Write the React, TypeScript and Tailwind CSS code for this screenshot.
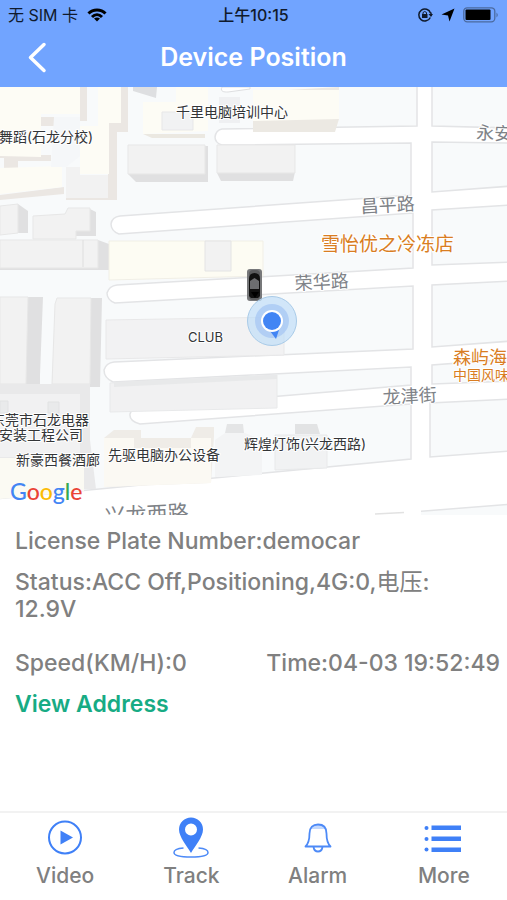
import React from 'react';

const shadows = [
  'M0 114H41V117H54V126H0Z M80 87H87V121H80Z M121 87H128V132H117V200H66V192H108V123H121Z',
  'M0 155H51V161H18V168H4V158H0Z',
  'M0 195L64 187V194L0 200Z',
];

// grey blocks: top face first, darker side faces under it
const buildings = [
  { side: 'M128 174L136 182H208V146H205V174Z', top: 'M128 145H205V174H128Z' },
  { side: 'M217 173L221 181H293L295 172Z', top: 'M217 145H295V173H217Z' },
  { side: 'M18 204L28 211V233H18Z', top: 'M0 206L18 204V233L0 235Z' },
  { side: 'M90 209L96 212V236H76V230H90Z', top: 'M33 216L65 214L68 208H90V231H76V239H33Z' },
  { side: 'M98 240L109 244V270H0V267H98Z', top: 'M0 240H98V268H0Z' },
  { side: 'M28 297H43L40 375V384H0V375H26Z', top: 'M0 297H28L26 384H0Z' },
  { side: 'M91 298H102L100 387H52V375H90Z', top: 'M52 384L55 304L57 298H91L90 384Z' },
];

const roads = [
  'M222 129L417 126V80H432V126L512 128V143L432 142V192L512 186V205L432 210V265L512 262V281L432 285V347L512 341V359L432 365V384L512 381V399L430 403V457L512 451V504L0 545L-5 499L411 459V404L140 424Q129 421 130 414Q131 409 139 408L411 385V367L113 382Q104 378 104 370Q106 363 114 362L413 349V286L115 303Q107 300 107 293Q109 286 117 285L413 268V213L119 234Q111 231 111 224Q112 217 120 216L411 195V143L222 145Q215 143 215 137Q216 130 222 129Z',
];

const placeLabels = [
  { x: 176, y: 117, size: 14, text: '千里电脑培训中心' },
  { x: -1, y: 142, size: 14, text: '舞蹈(石龙分校)' },
  { x: 188, y: 342, size: 13, text: 'CLUB' },
  { x: -9, y: 425, size: 14, text: '东莞市石龙电器' },
  { x: -1, y: 440, size: 14, text: '安装工程公司' },
  { x: 16, y: 465, size: 14, text: '新豪西餐酒廊' },
  { x: 108, y: 460, size: 14, text: '先驱电脑办公设备' },
  { x: 244, y: 449, size: 14, text: '辉煌灯饰(兴龙西路)' },
];

const roadLabels = [
  { x: 361, y: 213, angle: -3, text: '昌平路' },
  { x: 295, y: 290, angle: -3, text: '荣华路' },
  { x: 383, y: 404, angle: -3, text: '龙津街' },
  { x: 476, y: 139, angle: 2, text: '永安路' },
];

const googleLetters = [
  { letter: 'G', color: 'text-[#4285f4]' },
  { letter: 'o', color: 'text-[#ea4335]' },
  { letter: 'o', color: 'text-[#fbbc05]' },
  { letter: 'g', color: 'text-[#4285f4]' },
  { letter: 'l', color: 'text-[#34a853]' },
  { letter: 'e', color: 'text-[#ea4335]' },
];

const VideoIcon = () => (
  <svg viewBox="0 0 40 42" className="w-10 h-[42px]" fill="none">
    <circle cx="20" cy="20.500" r="16" stroke="#3f80f7" strokeWidth="2" />
    <path d="M15.500 13.500L28 20.500L15.500 27.500Z" fill="#3f80f7" />
  </svg>
);

const TrackIcon = () => (
  <svg viewBox="0 0 40 42" className="w-10 h-[42px]" fill="none">
    <path
      d="M20 36C16 29 8 20 8 12.500A12 12 0 0 1 32 12.500C32 20 24 29 20 36ZM20 6.500A6 6 0 1 0 20 18.500A6 6 0 1 0 20 6.500Z"
      fill="#3f80f7"
      fillRule="evenodd"
    />
    <path d="M12.500 31C6 31.500 3 33 3 35.500C3 38.500 10 40 20 40S37 38.500 37 35.500C37 33 34 31.500 27.500 31" stroke="#4d8af7" strokeWidth="1.500" />
  </svg>
);

const AlarmIcon = () => (
  <svg viewBox="0 0 40 42" className="w-10 h-[42px]" fill="none">
    <path d="M13 12C15 6 25 6 27 12Z" fill="#c3d8fd" />
    <path
      d="M7.500 29.500C10 27 11.500 23 11.500 16.500C11.500 10.500 15 7.500 20 7.500S28.500 10.500 28.500 16.500C28.500 23 30 27 32.500 29.500ZM15.500 30C16 33 18 34.500 20 34.500S24 33 24.500 30"
      stroke="#4d8af7"
      strokeWidth="1.800"
      strokeLinejoin="round"
    />
  </svg>
);

const MoreIcon = () => (
  <svg viewBox="0 0 40 42" className="w-10 h-[42px]" fill="#3f80f7">
    <circle cx="2.500" cy="11" r="2" />
    <circle cx="2.500" cy="22" r="2" />
    <circle cx="2.500" cy="32.500" r="2" />
    <path d="M7.500 8.500H37V13H7.500ZM7.500 19.500H37V24H7.500ZM7.500 30.500H37V35H7.500Z" />
  </svg>
);

const tabs = [
  { label: 'Video', icon: <VideoIcon /> },
  { label: 'Track', icon: <TrackIcon /> },
  { label: 'Alarm', icon: <AlarmIcon /> },
  { label: 'More', icon: <MoreIcon /> },
];

const StatusBar: React.FC = () => (
  <div className="grid grid-cols-3 items-center h-[30px] px-2 text-base text-[#101a2c]">
    <div className="flex items-center gap-[9px]">
      <span>无 SIM 卡</span>
      <svg viewBox="0 0 20 14" className="w-5 h-3.5" fill="none" stroke="#000" strokeWidth="3">
        <path d="M1.500 5.500C6 0.800 14 0.800 18.500 5.500M5 9C8 6 12 6 15 9" />
        <path d="M7 10.500Q10 8.500 13 10.500L10 13.500Z" fill="#000" stroke="none" />
      </svg>
    </div>
    <div className="text-center font-medium">上午10:15</div>
    <div className="flex items-center justify-end gap-2">
      <svg viewBox="0 0 16 16" className="w-4 h-4" fill="none" stroke="#101a2c" strokeWidth="1.500">
        <path d="M13.300 10.500A6 6 0 1 1 13.500 6M14 5.500V9" />
        <path d="M11.500 7H16L14 10Z" fill="#101a2c" stroke="none" />
        <rect x="5" y="7" width="5.500" height="4" fill="#101a2c" stroke="none" />
        <path d="M6 7V5.500Q7.700 3.500 9.500 5.500V7" strokeWidth="1" />
      </svg>
      <svg viewBox="0 0 14 14" className="w-3.5 h-3.5" fill="#000">
        <path d="M13.500 0.500L8.500 13.500L7 7.500L0.500 6.500Z" />
      </svg>
      <svg viewBox="0 0 36 16" className="w-9 h-4">
        <rect x="0.800" y="0.800" width="31" height="14" rx="3.500" fill="none" stroke="#4b6a9f" strokeWidth="1.300" />
        <rect x="2.500" y="2.500" width="25" height="10.500" rx="1" fill="#000" />
        <path d="M33.500 5.500Q36 7.800 33.500 10.500Z" fill="#4b6a9f" />
      </svg>
    </div>
  </div>
);

const DeviceMap: React.FC = () => (
  <div className="relative h-[428px] overflow-hidden bg-[#f8fafb]">
    <svg viewBox="0 87 507 428" preserveAspectRatio="xMidYMid slice" className="w-full h-full">
      {shadows.map((d) => (
        <path key={d} d={d} fill="#ebe7e3" />
      ))}
      <g fill="#fdfcf5">
        <path d="M0 87H80V114H41V157L0 156Z" />
        <path d="M98 87H121V123H109V174H80V126H98Z" />
        <path d="M0 168L62 166V187L0 194Z" />
        <path d="M143 102H176V87H208V131L143 134Z" />
      </g>
      <path d="M54 117H80V156L66 167H51Z" fill="#f5f7f9" />
      <path d="M66 167H80V175H108V198H66Z" fill="#f2f2f2" />
      <path d="M143 134H205V138H152Z" fill="#ebe8e1" />
      <path d="M162 112H193V130H162Z" fill="#f1f2f3" stroke="#e7e7e8" />
      <path d="M133 87H157L156 98L133 91Z" fill="#dedfe1" />
      <path d="M219 97H240V123H219Z" fill="#eff0f2" />

      {roads.map((d) => (
        <path key={d} d={d} fill="#fff" stroke="#e3e4e6" strokeWidth="1.500" />
      ))}
      <path d="M222 87C220 92 224 92 228 92L250 89V87Z" fill="#fff" stroke="#dedfe1" />
      <path d="M253 92L339 87V119L335 132H253Z" fill="#ece9e3" />
      <path d="M253 90H339V119L253 121Z" fill="#fdfcf5" />

      {buildings.map((b) => (
        <g key={b.top}>
          <path d={b.side} fill="#e0e0e1" />
          <path d={b.top} fill="#f2f2f2" stroke="#e7e7e7" strokeWidth="1" />
        </g>
      ))}
      <path d="M83 240V267" stroke="#dedede" />
      <path d="M109 241H263V276L109 280Z" fill="#fdfcf3" stroke="#f1efe6" />
      <path d="M205 241H231V271H205Z" fill="#f2f2f2" stroke="#e4e4e4" />
      <path d="M106 320L284 317V355L106 359Z" fill="#f2f2f3" stroke="#e8e8e9" />
      <path d="M110 383L277 375V408L110 412Z" fill="#f1f1f2" stroke="#e8e9ea" />
      <path d="M114 382L277 375V379L114 387Z" fill="#e8e9ea" />

      <path d="M0 384H90V440L96 489H0Z" fill="#e9e9ea" />
      <path d="M0 394H80V457H0Z" fill="#f1f1f2" />
      <path d="M0 401H8V413H0ZM48 402H59V413H48Z" fill="#e9eaeb" stroke="#e1e2e3" />
      <path d="M0 458H84V491L0 499Z" fill="#fbfaf3" />
      <path d="M104 438L114 430H141V438H191L196 427H214V436L211 483L104 487Z" fill="#efece7" />
      <path d="M104 438H134V448H191V438H211V483L104 487Z" fill="#fbf9f3" />
      <path d="M225 433H245L262 440V475L215 477V440Z" fill="#f3f4f5" />
      <path d="M227 424H243L244 433H225Z" fill="#e4e5e6" />
      <path d="M295 424H317L320 434H295Z" fill="#e2e3e4" />
      <path d="M275 435H327V468L275 470Z" fill="#f1f2f3" stroke="#e8e9ea" />
      <path d="M340 506H421V516H340Z" fill="#fff" />
      <path d="M375 514L404 512.500" stroke="#e2e2e2" strokeWidth="1.500" />

      <g fill="#333537" stroke="#fff" strokeWidth="2" strokeLinejoin="round" paintOrder="stroke">
        {placeLabels.map((p) => (
          <text key={p.text} x={p.x} y={p.y} fontSize={p.size}>{p.text}</text>
        ))}
      </g>
      <g fill="#7e8287" fontSize="18" stroke="#fff" strokeWidth="2" paintOrder="stroke">
        {roadLabels.map((r) => (
          <text key={r.text} x={r.x} y={r.y} transform={`rotate(${r.angle} ${r.x} ${r.y})`}>{r.text}</text>
        ))}
        <text x="105" y="524" fontSize="21" transform="rotate(-3 105 524)">兴龙西路</text>
      </g>
      <g fill="#d97d22" stroke="#fff" strokeWidth="2" paintOrder="stroke">
        <text x="321" y="251" fontSize="19">雪怡优之冷冻店</text>
        <text x="453" y="364" fontSize="18">森屿海鲜</text>
        <text x="453" y="380" fontSize="14">中国风味</text>
      </g>

      {/* device marker */}
      <rect x="247" y="269" width="15" height="32" rx="3" fill="#77787a" />
      <rect x="249" y="270" width="11" height="30" rx="4" fill="#5b5c5e" />
      <path d="M249 279Q249 273 254.500 273Q260 273 260 279V296L258 298H251L249 296Z" fill="#111" />
      <path d="M250 281L254.500 278L259 281V289H250Z" fill="#6d6e70" />
      <path d="M251 292H259L255 298Z" fill="#000" />

      {/* own position */}
      <circle cx="272" cy="321" r="24.500" fill="#bcdcf8" fillOpacity="0.650" stroke="#a9cbe8" />
      <circle cx="272" cy="321" r="17" fill="#a4c4f3" fillOpacity="0.700" />
      <path d="M270 331L279 330L276 339Z" fill="#4285f4" />
      <circle cx="272" cy="321" r="11" fill="#fff" />
      <circle cx="272" cy="321" r="9" fill="#4285f4" />
    </svg>
    <div className="absolute left-[10px] bottom-[10px] text-[23px] leading-7 font-medium font-['Lato']">
      {googleLetters.map((g, idx) => (
        <span key={idx} className={g.color}>{g.letter}</span>
      ))}
    </div>
  </div>
);

const App: React.FC = () => {
  return (
    <div className="flex flex-col min-h-screen bg-white font-['Inter','Noto_Sans_CJK_SC',sans-serif]">
      <header className="bg-[#71a4ff]">
        <StatusBar />
        <div className="relative flex items-center justify-center h-[57px] pb-0.5">
          <button aria-label="Back" className="absolute left-6 top-3">
            <svg viewBox="0 0 24 32" className="w-6 h-8" fill="none" stroke="#fff" strokeWidth="3.500" strokeLinecap="round" strokeLinejoin="round">
              <path d="M20 2.500L6.500 15.500L20 28.500" />
            </svg>
          </button>
          <h1 className="text-[25px] font-semibold text-white">Device Position</h1>
        </div>
      </header>

      <DeviceMap />

      <main className="flex-1 flex flex-col items-start px-[15px] pt-[13px] text-[23px] leading-[27px] font-medium text-[#808080]">
        <p>License Plate Number:democar</p>
        <p className="mt-[14px]">
          Status:ACC Off,Positioning,4G:0,<span className="font-normal">电压</span>:
          <br />
          12.9V
        </p>
        <div className="flex justify-between self-stretch mt-[27px] -mr-2">
          <span>Speed(KM/H):0</span>
          <span>Time:04-03 19:52:49</span>
        </div>
        <button className="mt-[14px] font-semibold text-[#17ab84]">View Address</button>
      </main>

      <nav className="grid grid-cols-4 h-[89px] pl-0.5 border-t-2 border-[#f2f2f2]">
        {tabs.map((tab) => (
          <button key={tab.label} className="flex flex-col items-center pt-1 text-[21px] leading-[34px] font-medium text-[#808080]">
            {tab.icon}
            {tab.label}
          </button>
        ))}
      </nav>
    </div>
  );
};

export default App;
